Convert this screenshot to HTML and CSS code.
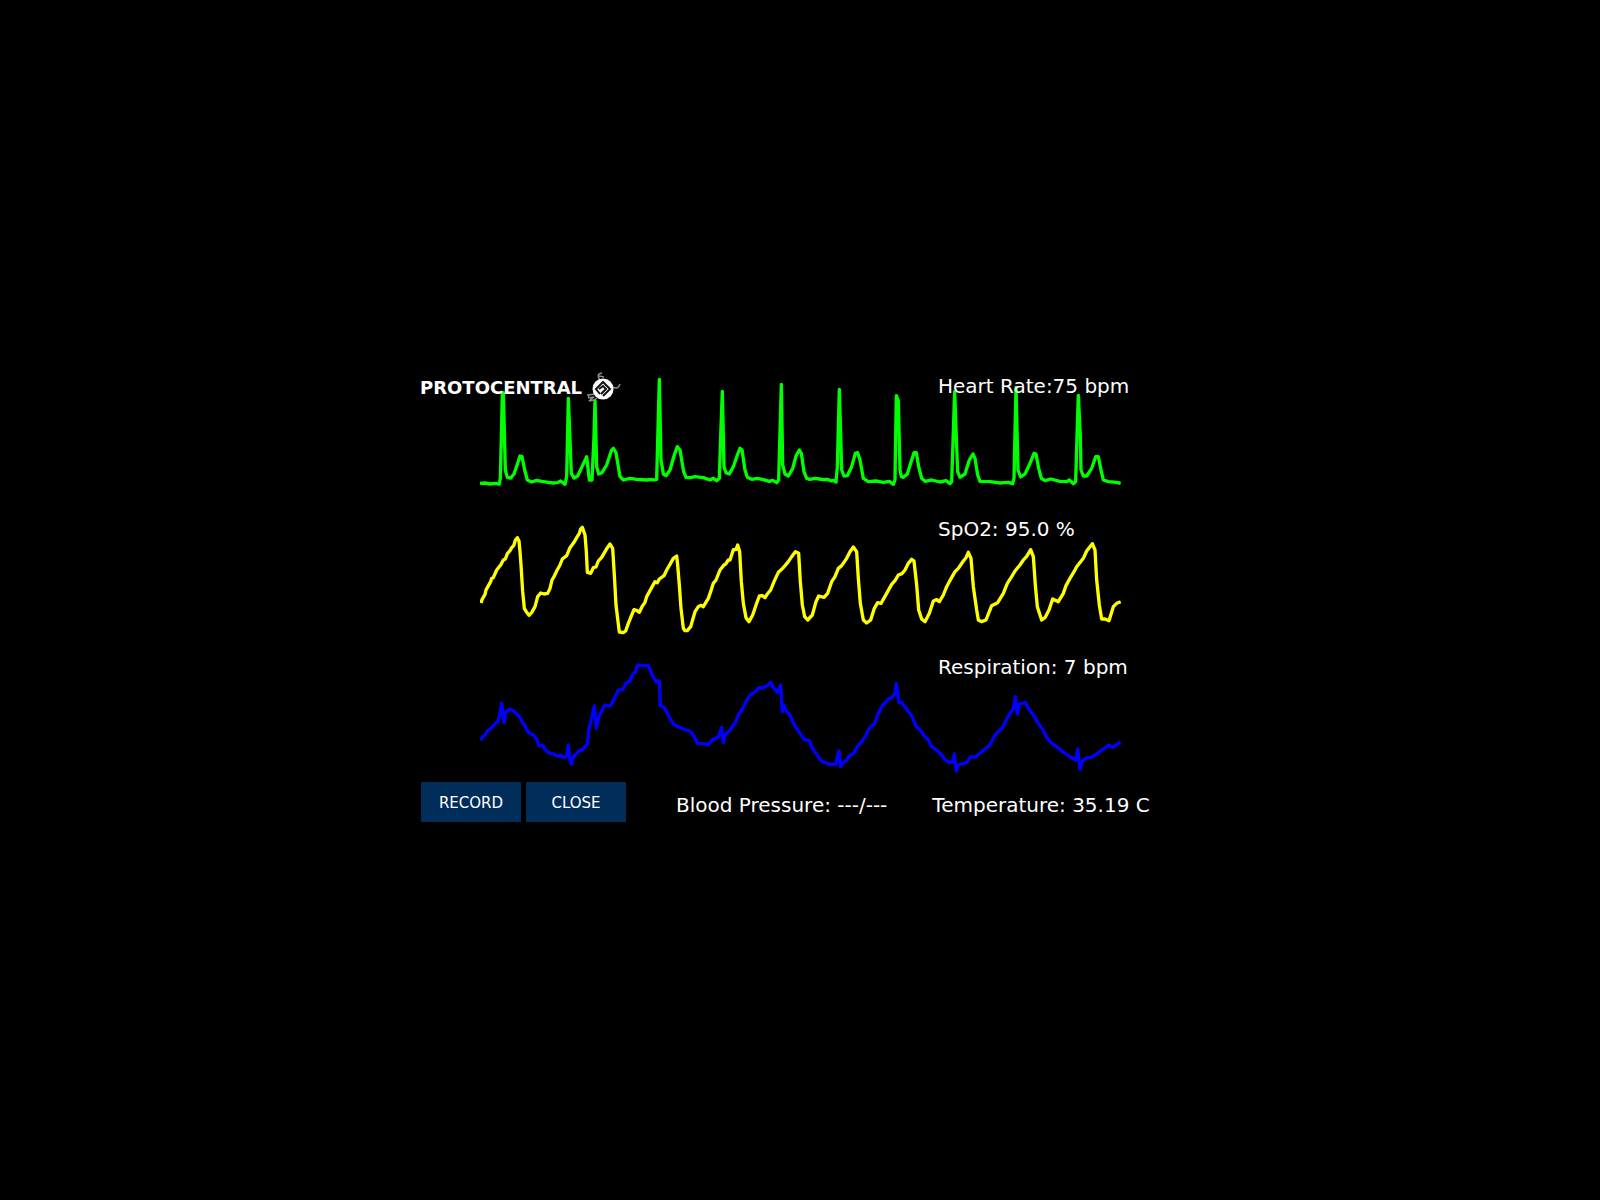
FILE: index.html
```html
<!DOCTYPE html>
<html lang="en">
<head>
    <meta charset="UTF-8">
    <title>ProtoCentral Monitor</title>
    <link rel="stylesheet" href="styles.css">
</head>
<body>

<main class="monitor">
    <div class="logo">
        <span class="logo-name">PROTOCENTRAL</span>
        <svg class="logo-mark" viewBox="0 0 36 32" aria-hidden="true">
            <g fill="none" stroke="#8c8c8c" stroke-width="1.5">
                <path d="M14 8 Q11 4 13 2 L16 1 M13 4 L18 5"/>
                <path d="M27 15 Q32 18 34 12"/>
                <path d="M10 22 L2 23 L3 26 L8 25 L3 29 L8 28 L11 26"/>
            </g>
            <circle cx="17" cy="17" r="10.5" fill="#fff"/>
            <path d="M14 22 L10 17 L17 10 L24 17 L17 24" fill="none" stroke="#111" stroke-width="2"/>
            <path d="M13 17 L17 14 L20 17 L15 22" fill="none" stroke="#111" stroke-width="2"/>
        </svg>
    </div>

    <section class="channels">
        <div class="channel ecg">
            <svg class="trace" viewBox="30 -21 1926 420">
                <polyline points="30,340 45,339 60,342 74,340 88,342 91,325 97,75 100,68 106,300 112,322 122,324 132,312 143,280 150,258 156,260 164,300 172,330 185,336 200,331 215,334 235,337 250,339 262,338 272,333 285,343 290,320 295,85 304,310 312,324 323,318 338,286 350,260 358,330 366,330 372,200 375,92 380,290 386,312 396,308 410,285 424,242 430,235 438,248 450,320 460,330 480,325 500,328 530,330 545,328 552,330 560,328 568,28 573,270 580,312 588,317 600,300 612,258 622,230 630,240 641,305 648,322 660,323 675,320 700,323 720,330 730,325 740,332 748,325 752,200 757,64 762,290 768,308 778,312 790,290 802,255 810,235 816,240 825,300 832,322 845,328 862,325 880,329 898,334 908,331 920,338 926,330 934,43 938,285 945,312 955,318 968,296 978,258 988,240 994,250 1002,305 1010,325 1020,328 1035,325 1048,327 1060,329 1072,328 1084,333 1090,331 1098,336 1102,290 1108,58 1115,300 1122,318 1132,317 1145,290 1156,250 1163,248 1170,270 1180,325 1195,335 1218,333 1240,337 1258,334 1270,343 1275,330 1279,77 1285,92 1290,300 1294,320 1300,322 1312,312 1325,270 1332,248 1339,248 1346,290 1355,325 1365,334 1385,330 1410,336 1428,332 1440,341 1445,335 1454,65 1460,230 1463,305 1470,322 1485,312 1498,270 1509,252 1515,265 1523,315 1530,334 1560,335 1590,339 1615,337 1628,341 1632,325 1638,52 1644,300 1652,321 1665,312 1680,280 1692,250 1698,252 1706,295 1714,325 1725,332 1742,327 1770,334 1790,335 1798,330 1810,341 1817,335 1821,200 1825,76 1831,200 1833,300 1840,318 1850,318 1865,295 1877,260 1885,260 1894,305 1900,330 1915,335 1940,337 1952,340"/>
            </svg>
            <div class="reading">Heart Rate:75 bpm</div>
        </div>

        <div class="channel spo2">
            <svg class="trace" viewBox="30 -27 1926 405">
                <polyline points="33,264 36,254 45,238 48,225 54,214 62,200 65,190 70,188 80,165 92,150 100,135 106,132 112,116 120,107 125,98 131,92 136,76 142,68 147,78 150,110 153,150 158,230 163,280 170,292 177,301 185,293 195,275 203,245 212,234 222,237 233,235 240,220 246,195 252,185 260,168 270,150 277,132 290,122 300,98 312,82 320,68 328,55 332,42 337,37 345,60 349,110 352,172 362,175 370,158 378,156 385,138 395,127 402,115 412,98 420,87 428,100 433,180 438,270 444,320 448,351 460,353 467,348 475,325 484,303 492,284 500,286 508,292 516,275 525,262 530,245 545,218 555,200 562,203 568,192 582,182 590,165 600,148 610,130 620,123 623,150 628,210 633,280 640,340 645,347 652,347 662,335 675,290 685,275 692,271 700,275 715,250 722,230 730,205 738,195 750,165 762,150 767,147 775,135 780,135 790,104 798,104 803,90 809,110 814,200 820,265 828,308 837,320 848,300 860,265 868,243 877,242 885,248 892,237 902,225 912,200 925,172 935,163 945,152 955,140 965,125 976,110 986,115 991,200 997,270 1004,305 1013,315 1027,300 1038,260 1046,243 1062,247 1073,235 1085,200 1095,185 1105,160 1115,152 1130,130 1140,110 1150,96 1160,110 1165,190 1171,265 1180,315 1190,324 1202,315 1213,280 1223,263 1233,265 1250,235 1265,208 1275,197 1285,180 1296,176 1305,165 1315,145 1325,133 1332,138 1340,210 1346,285 1355,312 1365,320 1378,295 1390,258 1400,254 1408,260 1420,240 1430,215 1438,200 1455,170 1465,160 1480,138 1488,128 1495,112 1503,130 1510,215 1520,285 1525,315 1535,320 1548,315 1565,272 1583,263 1600,235 1612,205 1625,185 1635,168 1650,150 1660,135 1670,124 1682,104 1690,125 1696,210 1702,275 1715,315 1725,308 1737,285 1748,252 1765,260 1780,235 1788,212 1800,190 1812,170 1820,155 1840,130 1850,108 1867,86 1875,105 1880,195 1888,270 1895,312 1905,312 1917,317 1930,275 1940,265 1952,260"/>
            </svg>
            <div class="reading">SpO2: 95.0 %</div>
        </div>

        <div class="channel resp">
            <svg class="trace" viewBox="30 -18 1926 405">
                <polyline points="33,272 38,260 45,256 52,243 65,233 75,222 85,212 90,190 95,160 102,218 107,187 120,177 135,186 150,202 158,220 164,224 170,240 180,250 190,255 200,268 208,288 218,285 225,298 235,308 250,312 265,319 272,315 280,323 290,318 295,285 299,325 304,342 310,320 322,308 330,300 338,300 344,290 352,283 357,235 366,200 373,168 379,234 385,205 395,182 405,165 412,168 422,166 432,148 445,120 458,119 468,100 480,92 488,73 495,68 503,45 520,47 535,47 545,72 558,95 568,93 571,168 583,172 590,186 600,205 608,220 620,228 640,237 660,243 672,258 682,280 700,281 715,284 728,268 745,262 755,232 760,278 765,255 780,240 795,220 805,195 815,182 828,155 840,135 852,128 862,118 868,112 875,115 892,107 902,97 910,113 922,127 932,105 937,185 942,165 950,185 960,195 968,215 975,228 990,250 1002,268 1018,272 1025,292 1035,305 1048,325 1058,335 1068,338 1075,343 1098,343 1102,320 1107,303 1112,350 1120,338 1130,330 1140,316 1150,312 1162,290 1178,272 1188,255 1200,232 1213,222 1225,190 1238,165 1248,157 1255,147 1268,140 1275,130 1279,100 1287,158 1295,158 1310,178 1325,197 1338,228 1350,240 1365,260 1375,270 1385,290 1400,300 1415,315 1425,330 1440,338 1448,335 1453,312 1459,363 1464,345 1490,338 1502,320 1515,322 1535,305 1555,290 1565,275 1575,255 1598,232 1610,208 1620,190 1631,175 1636,140 1642,192 1648,162 1666,157 1675,175 1690,195 1705,220 1720,242 1730,262 1745,280 1760,290 1780,307 1800,320 1817,330 1823,297 1830,358 1836,335 1850,323 1865,322 1890,305 1915,286 1930,292 1942,282 1952,277"/>
            </svg>
            <div class="reading">Respiration: 7 bpm</div>
        </div>
    </section>

    <footer class="bottom-bar">
        <div class="buttons">
            <button type="button">RECORD</button>
            <button type="button">CLOSE</button>
        </div>
        <div class="pressure">Blood Pressure: ---/---</div>
        <div class="temperature">Temperature: 35.19 C</div>
    </footer>
</main>

</body>
</html>
```
FILE: styles.css
```css
body {
    margin: 0;
    min-height: 100vh;
    display: flex;
    align-items: center;
    justify-content: center;
    background: #000;
    color: #fff;
    font-family: "DejaVu Sans", sans-serif;
    font-size: 20px;
    line-height: 24px;
}
.monitor {
    position: relative;
    width: 100%;
    max-width: 800px;
    padding: 3px 0 18px;
    box-sizing: border-box;
}

/* logo sits over the first trace */
.logo {
    position: absolute;
    top: 12px;
    left: 20px;
    z-index: 1;
    display: flex;
    align-items: center;
    gap: 4px;
}
.logo-name {
    font-size: 18px;
    font-weight: bold;
}
.logo-mark {
    width: 36px;
    height: 32px;
}

.channels {
    display: flex;
    flex-direction: column;
    gap: 3px;
}
.channel {
    position: relative;
    padding: 0 78px 0 80px;
}
.trace {
    display: block;
    width: 100%;
}
.trace polyline {
    fill: none;
    stroke-width: 10;
    stroke-linejoin: round;
}
.ecg polyline {
    stroke: #00ff00;
}
.spo2 polyline {
    stroke: #ffff00;
}
.resp polyline {
    stroke: #0000ff;
}
.reading {
    position: absolute;
    top: 11px;
    left: 538px;
}

.bottom-bar {
    display: flex;
    align-items: center;
    margin-top: 3px;
    padding: 0 20px 0 21px;
}
.buttons {
    display: flex;
    gap: 5px;
    margin-right: 50px;
}
button {
    width: 100px;
    height: 40px;
    padding: 2px 0 0;
    border: none;
    background: #002d5a;
    color: #fff;
    font-family: inherit;
    font-size: 15px;
}
.pressure,
.temperature {
    padding-top: 6px;
}
.temperature {
    margin-left: 45px;
}
```
